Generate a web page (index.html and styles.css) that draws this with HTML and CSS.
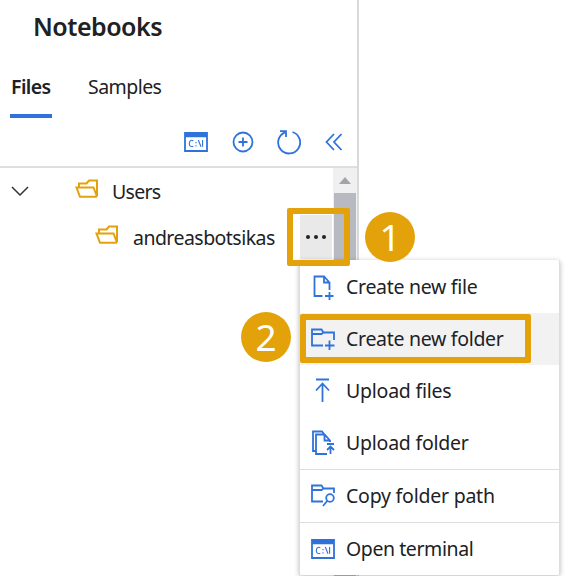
FILE: index.html
```html
<!DOCTYPE html>
<html lang="en">
<head>
<meta charset="utf-8">
<title>Notebooks</title>
<link rel="stylesheet" href="styles.css">
</head>
<body>
<svg class="defs" width="0" height="0" aria-hidden="true">
  <symbol id="terminal" viewBox="0 0 24 20"><path d="M1 1H23V19H1ZM1 4.3H23M1 2.5H23"/><path class="fine" d="M9.3 8.8Q8.4 8 7.3 8.3Q5.3 8.9 5.3 11.7Q5.3 15.2 9.3 14.3M12 10V11.2M12 13.3V14.5M14.3 8L17 14.8M18.6 8V14.8"/></symbol>
  <symbol id="folder-open" viewBox="0 0 24 20"><path d="M4 9V4.5H11.5L14 1.5H22V17.5L18.5 8.5H1.5L5 17.8H22"/></symbol>
</svg>
<aside class="panel">
  <h1 class="title">Notebooks</h1>
  <nav class="tabs"><span class="tab active">Files</span><span class="tab samples">Samples</span></nav>
  <div class="toolbar">
    <svg class="icon" width="24" height="20"><use href="#terminal"/></svg>
    <svg class="icon" width="22" height="22" viewBox="0 0 22 22"><circle cx="11" cy="11" r="9.5"/><path d="M11 6.5V15.5M6.5 11H15.5"/></svg>
    <svg class="icon" width="24" height="26" viewBox="0 0 24 26"><path d="M15.5 3A11 11 0 1 1 8 3.3M3 2.2H9V8"/></svg>
    <svg class="icon" width="18" height="18" viewBox="0 0 18 18"><path d="M9 1L1.5 9L9 17M16.5 1L9 9L16.5 17"/></svg>
  </div>
  <div class="content">
    <div class="tree">
      <div class="node">
        <svg class="icon chevron" width="18" height="10" viewBox="0 0 18 10"><path d="M1 1L9 9L17 1"/></svg>
        <svg class="icon gold" width="24" height="20"><use href="#folder-open"/></svg>
        <span class="users">Users</span>
      </div>
      <div class="node child">
        <svg class="icon gold" width="24" height="20"><use href="#folder-open"/></svg>
        <span class="owner">andreasbotsikas</span>
        <button class="more" aria-label="More"><i></i><i></i><i></i></button>
      </div>
    </div>
    <div class="scrollbar"><div class="arrow"><svg width="12" height="7" viewBox="0 0 12 7"><path d="M0 7L6 0L12 7Z"/></svg></div><div class="thumb"></div></div>
  </div>
</aside>
<div class="menu">
  <div class="item"><svg class="icon" width="24" height="26" viewBox="0 0 24 26"><path d="M11.5 22H3.5V2.5H13L18.5 8.5V16M13 2.5V8.5H18.5M18.5 18V26M14 22H22.5"/></svg><span class="t1">Create new file</span></div>
  <div class="item hover"><svg class="icon" width="24" height="26" viewBox="0 0 24 26"><path d="M12 19.5H1V3.5H10.5L12.5 6.5H23V14M1 8H10.5L12.5 6.5M18.5 14.5V24M14 19.5H23.5"/></svg><span class="t2">Create new folder</span></div>
  <div class="item"><svg class="icon" width="24" height="26" viewBox="0 0 24 26"><path d="M5 1.5H18M11.5 24V5.5M5 12.5L11.5 5.5L18 12.5"/></svg><span class="t3">Upload files</span></div>
  <div class="item"><svg class="icon" width="24" height="26" viewBox="0 0 24 26"><path d="M5 21H2V1.5H11L13 4M16 24H5V4.5H13.5L19 10.5V12M13.5 4.5V10.5H19M16 14H23M19.5 24V17M16 20L19.5 16.5L23 20"/></svg><span class="t4">Upload folder</span></div>
  <div class="item split"><svg class="icon" width="24" height="26" viewBox="0 0 24 26"><path d="M12 18.5H1V2.5H10.5L12.5 5.5H23V10M1 7H10.5L12.5 5.5M12 23L16.5 17.5"/><circle cx="19" cy="15" r="3.8"/></svg><span class="t5">Copy folder path</span></div>
  <div class="item split"><svg class="icon" width="24" height="20"><use href="#terminal"/></svg><span class="t6">Open terminal</span></div>
</div>
<div class="frame frame-more"></div>
<div class="frame frame-create"></div>
<div class="badge one">1</div>
<div class="badge two">2</div>
</body>
</html>
```
FILE: styles.css
```css
* { box-sizing: border-box; }
body { margin: 0; width: 565px; height: 576px; overflow: hidden; position: relative; background: #fff; color: #202124; font: 19.5px "Noto Sans", "Open Sans", sans-serif; }
.defs { position: absolute; }
span, h1 { white-space: nowrap; }
.icon { flex: none; fill: none; stroke: #2f73da; stroke-width: 1.8; }
.fine { stroke-width: 1.1; }
.gold { stroke: #e3a20a; stroke-width: 2; }
.panel { width: 359px; height: 576px; border-right: 2px solid #d9d9d9; display: flex; flex-direction: column; }
.title { margin: 0; padding-left: 33px; height: 54px; line-height: 53px; font-size: 25px; font-weight: 600; letter-spacing: -.5px; }
.tabs { display: flex; gap: 36px; padding-left: 10px; height: 64px; }
.tab { height: 64px; line-height: 65px; }
.active { width: 42px; font-weight: 600; letter-spacing: -.6px; text-indent: 1px; border-bottom: 4px solid #2f73da; }
.samples { letter-spacing: -.55px; }
.toolbar { height: 50px; border-bottom: 2px solid #dedede; padding: 0 14px 0 184px; display: flex; align-items: center; justify-content: space-between; }
.content { flex: 1; display: flex; }
.tree { flex: 1; min-width: 0; }
.node { height: 46px; display: flex; align-items: center; }
.node .gold { margin: -4px 13px 0 46px; }
.users { letter-spacing: -.7px; }
.owner { width: 143px; letter-spacing: -.54px; }
.chevron { margin-left: 11px; stroke: #333; stroke-width: 1.5; }
.child .gold { margin-left: 95px; margin-right: 14px; }
.more { margin-left: 24px; width: 32px; height: 44px; flex: none; border: 0; padding: 0; background: #e9e9e9; display: flex; align-items: center; justify-content: center; gap: 4px; }
.more i { width: 4px; height: 4px; border-radius: 50%; background: #222; }
.scrollbar { flex: none; width: 24px; background: #f0f0f0; display: flex; flex-direction: column; }
.arrow { height: 25px; display: flex; align-items: center; justify-content: center; }
.arrow svg { fill: #a1a4a8; }
.thumb { flex: 1; margin: 0 1px; background: #b7bbc1; }
.menu { position: absolute; left: 299px; top: 260px; width: 261px; height: 315px; padding-top: 1px; background: #fff; border-right: 1px solid #ddd; border-left: 1px solid #ddd; border-radius: 2px; box-shadow: 0 1px 5px rgba(0,0,0,.28); }
.item { height: 52px; display: flex; align-items: center; gap: 11px; padding-left: 11px; letter-spacing: -.3px; }
.item span { margin-top: -2px; }
.item.split { height: 53px; border-top: 1px solid #ddd; }
.t3, .t4, .t5 { letter-spacing: -.23px; }
.t6 { letter-spacing: -.42px; }
.hover { background: #f2f2f2; }
.frame { position: absolute; border: 6px solid #e3a20a; border-radius: 2px; }
.frame-more { left: 287px; top: 208px; width: 63px; height: 58px; }
.frame-create { left: 300px; top: 314px; width: 231px; height: 49px; }
.badge { position: absolute; width: 50px; height: 50px; border-radius: 50%; background: #e3a20a; color: #fff; text-align: center; font-size: 37px; line-height: 49px; }
.one { left: 365px; top: 212px; }
.two { left: 241px; top: 312px; }
```
